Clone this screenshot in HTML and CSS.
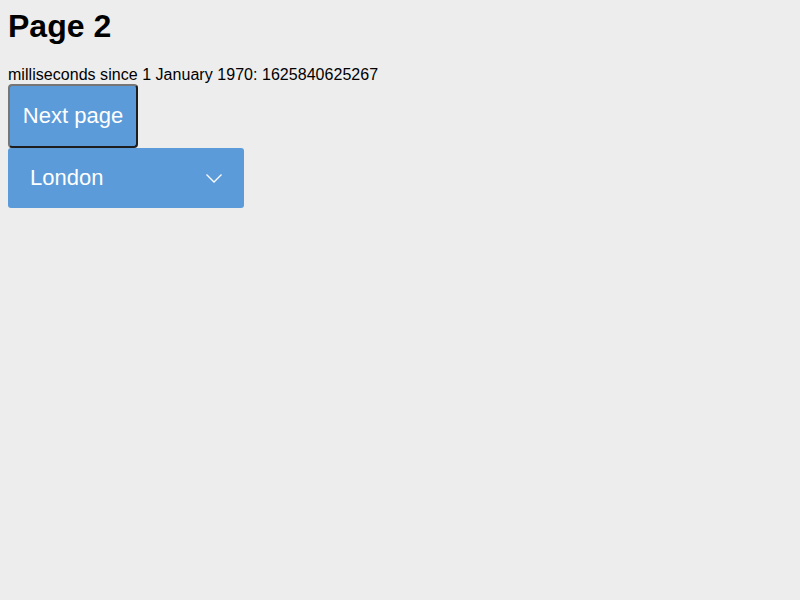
FILE: index.html
```html
<!DOCTYPE html>
<html lang="en">
<head>
<meta charset="utf-8">
<title>Page 2</title>
<link rel="stylesheet" href="styles.css">
</head>
<body>
<h1 class="title">Page 2</h1>
<div class="stamp">milliseconds since 1 January 1970: 1625840625267</div>
<button class="next-btn" type="button">Next page</button>
<div class="city-select">
  <span class="city-label">London</span>
  <svg class="chevron" width="16" height="9" viewBox="0 0 16 9" aria-hidden="true">
    <polyline points="0.5,0.5 8,8 15.5,0.5" fill="none" stroke="#ffffff" stroke-width="1.3"/>
  </svg>
</div>
</body>
</html>
```

FILE: styles.css
```css
html {
  background: #ededed;
}
body {
  margin: 8px;
  font-family: "Liberation Sans", Arial, sans-serif;
  color: #000;
}
.title {
  margin: 0 0 22px;
  font-size: 32px;
  font-weight: bold;
  line-height: 36px;
}
.stamp {
  font-size: 16px;
  line-height: 18px;
  letter-spacing: 0.04px;
}
.next-btn {
  display: block;
  margin: 0;
  width: 130px;
  height: 64px;
  padding: 0;
  text-align: center;
  background: #5b9bd9;
  color: #ffffff;
  font-family: "Liberation Sans", Arial, sans-serif;
  font-size: 22px;
  border: 2px solid;
  border-color: #767676 #1e1e1e #1e1e1e #767676;
  border-radius: 4px;
}
.city-select {
  display: flex;
  align-items: center;
  justify-content: space-between;
  width: 236px;
  height: 60px;
  box-sizing: border-box;
  padding: 0 22px;
  background: #5b9bd9;
  color: #ffffff;
  font-size: 22px;
  border-radius: 3px;
}
.chevron {
  display: block;
  margin-top: 1px;
}
```
